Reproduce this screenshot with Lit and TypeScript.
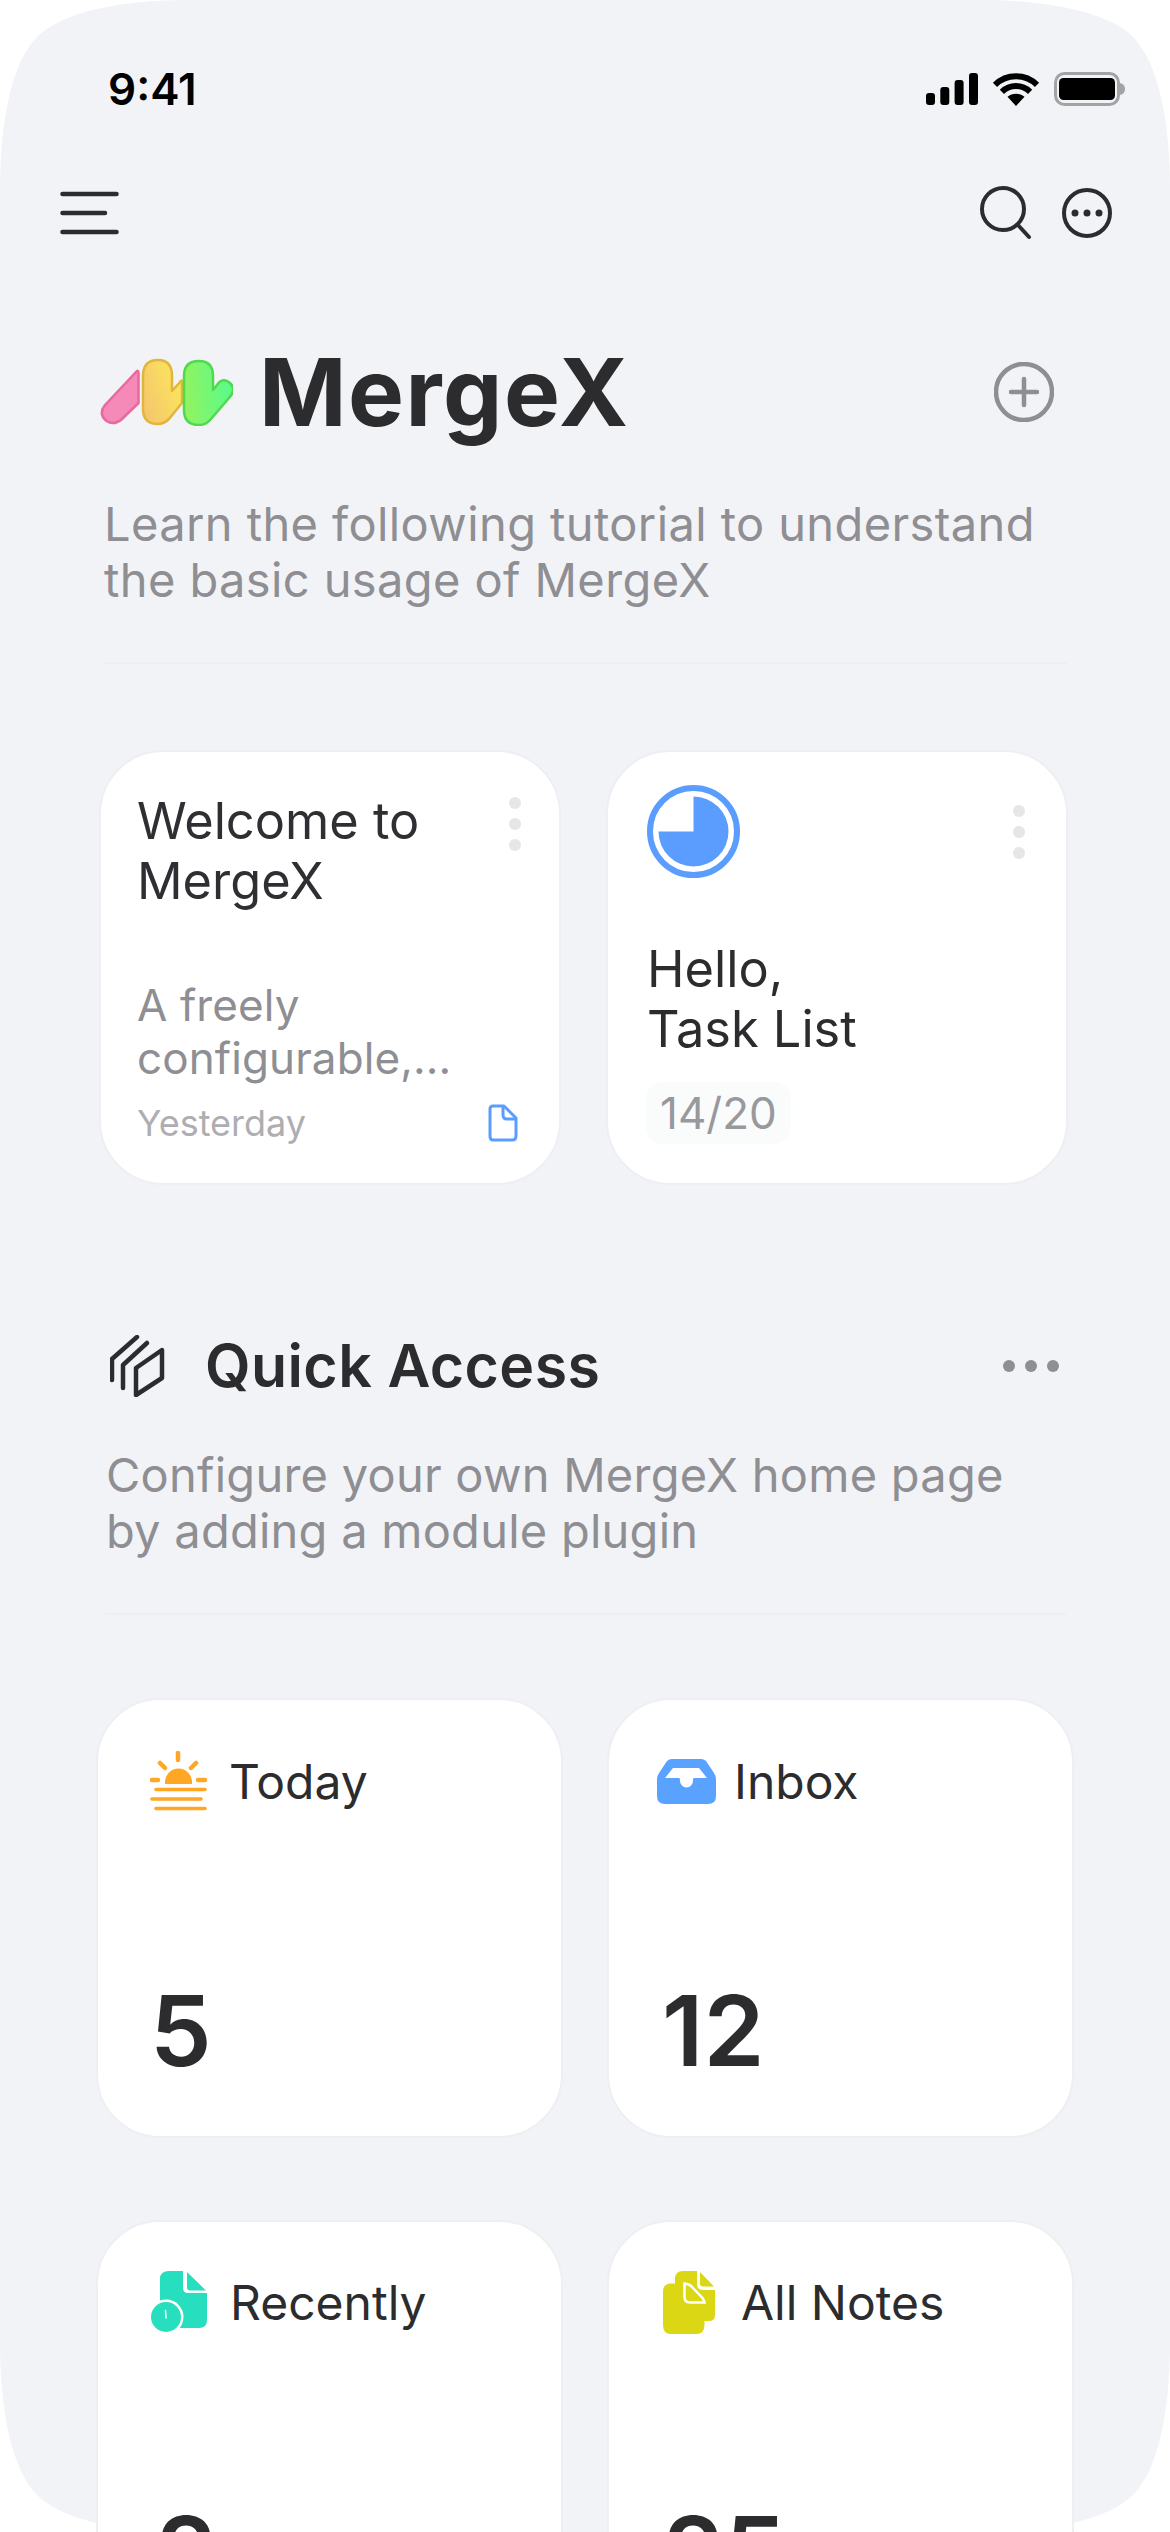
import { LitElement, html, css, svg } from "lit";
import { customElement } from "lit/decorators.js";

const dots = html`<div class="kebab"><i></i><i></i><i></i></div>`;

const todayIcon = svg`<svg class="ic" style="width:58px;height:60px" viewBox="0 0 58 60">
  <g fill="none" stroke="#FFA723" stroke-width="4.5" stroke-linecap="round">
    <path d="M28 2V9M10 12l5 5M46 12l-5 5M2 29h6M48 29h7"/>
  </g>
  <path d="M15 33V31a13.500 13.500 0 0 1 27 0v2z" fill="#FFA723"/>
  <g stroke="#FFA723" stroke-width="3.600" stroke-linecap="round">
    <path d="M6 38.500H55M2 48H51M6 57.500H55"/>
  </g></svg>`;

const inboxIcon = svg`<svg class="ic" style="width:59px;height:45px" viewBox="0 0 59 45">
  <path d="M15 0H44Q47 0 49 2L57 14Q59 17 59 20V37Q59 45 51 45H8Q0 45 0 37V20Q0 17 2 14L10 2Q12 0 15 0Z" fill="#5AA2FF"/>
  <path d="M16 9H42L50 19H37Q36 19 36 21V22A6.500 6.500 0 0 1 23 22V21Q23 19 22 19H8Z" fill="#fff"/></svg>`;

const recentIcon = svg`<svg class="ic" style="width:57px;height:62px" viewBox="0 0 57 62">
  <path d="M18 0H32V17Q32 22 37 22H56V49Q56 57 48 57H9V8Q9 0 18 0Z" fill="#27DFBF"/>
  <path d="M36 1L55 19.500H39Q36 19.500 36 16.500Z" fill="#27DFBF"/>
  <circle cx="15" cy="46" r="17.500" fill="#fff"/>
  <circle cx="15" cy="46" r="15" fill="#27DFBF"/>
  <path d="M14.500 39.500L15 47" stroke="#fff" stroke-width="1.500" stroke-linecap="round"/></svg>`;

const notesIcon = svg`<svg class="ic" style="width:52px;height:63px" viewBox="0 0 52 63">
  <path d="M20 0H34V13Q34 19 40 19H52V44Q52 50 46 50H12V8Q12 0 20 0Z" fill="#DCD714"/>
  <path d="M37 1L51 15.500H40Q37 15.500 37 12.500Z" fill="#DCD714"/>
  <path d="M8 12.500H20V27Q20 33 26 33H41.500V54Q41.500 63 33 63H8Q0 63 0 54V21Q0 12.500 8 12.500Z" fill="#DCD714"/>
  <path d="M21.500 12.500Q27 13 30 17L39.500 27Q41 29 41.500 31.500H27Q21.500 31.500 21.500 26Z" fill="#DCD714" stroke="#fff" stroke-width="2.500"/></svg>`;

const cards = [
  { icon: todayIcon, label: "Today", n: "5", cls: "today" },
  { icon: inboxIcon, label: "Inbox", n: "12", cls: "inbox" },
  { icon: recentIcon, label: "Recently", n: "2", cls: "recent" },
  { icon: notesIcon, label: "All Notes", n: "25", cls: "notes" },
];

@customElement("app-root")
export class AppRoot extends LitElement {
  static styles = css`
    :host { display: block; position: relative; width: 1170px; height: 2532px; overflow: hidden; background: #fff;
      font-family: Inter, "Liberation Sans", sans-serif; color: #2c2c2e; }
    .backdrop { position: absolute; inset: 0; width: 1170px; height: 2532px; }
    .screen { position: relative; display: flex; flex-direction: column; }
    svg { display: block; flex: none; }
    .status { display: flex; justify-content: space-between; align-items: center; height: 44px; margin-top: 67px; padding: 0 45px 0 108px; }
    .time { font-size: 44px; line-height: 44px; font-weight: 600; color: #000; }
    .sys { display: flex; align-items: center; gap: 14px; }
    .nav { display: flex; justify-content: space-between; align-items: center; height: 66px; margin-top: 69px; padding: 0 58px 0 60px; }
    .nav-right { display: flex; align-items: center; gap: 30px; }
    .brand { display: flex; align-items: center; height: 104px; margin-top: 94px; padding: 0 116px 0 100px; }
    .brand h1 { margin: 0 0 0 26px; flex: 1; font-size: 94px; line-height: 104px; font-weight: 700; color: #2c2c2e; letter-spacing: 1.500px; }
    .lead { margin: 0; padding-left: 104px; font-size: 47px; line-height: 56px; color: #8e8e93; letter-spacing: 0.4px; }
    .lead.first { margin-top: 52px; height: 112px; }
    .rule { height: 2px; background: #edeef1; margin: 0 104px 0 105px; }
    .rule.first { margin-top: 54px; }
    .top-cards { display: grid; grid-template-columns: 462px 462px; gap: 45px; margin: 86px 0 0 99px; }
    .card { background: #fff; border: 2px solid #eeeff3; border-radius: 64px; box-sizing: border-box; position: relative; }
    .top-cards .card { height: 435px; }
    .kebab { position: absolute; display: flex; flex-direction: column; gap: 9px; }
    .kebab i { width: 12px; height: 12px; border-radius: 50%; background: #e6e6e6; }
    .welcome { padding: 39px 30px 0 36px; display: flex; flex-direction: column; }
    .welcome .kebab { top: 45px; right: 38px; }
    .card-title { margin: 0; font-size: 50.500px; line-height: 60px; font-weight: 400; color: #2f2f33; }
    .snippet { margin: 68px 0 0; font-size: 44px; line-height: 53px; color: #8e8e93; letter-spacing: 0.1px; white-space: nowrap; }
    .meta { display: flex; justify-content: space-between; align-items: center; margin-top: 15px; padding-right: 11px; }
    .meta span { font-size: 36px; line-height: 46px; color: #aeaeb2; }
    .task { padding: 33px 30px 0 39px; display: flex; flex-direction: column; }
    .task .kebab { top: 53px; right: 41px; }
    .task .card-title { margin-top: 61px; color: #2c2c2e; }
    .badge { align-self: flex-start; margin: 23px 0 0 -1px; height: 62px; box-sizing: border-box; padding: 0 14px; display: flex; align-items: center; background: #fafbfb; border-radius: 16px; font-size: 44px; color: #98989d; }
    .section { display: flex; align-items: center; height: 66px; margin-top: 148px; padding: 0 111px 0 110px; }
    .section h2 { margin: 0 0 0 40px; flex: 1; font-size: 59px; line-height: 66px; font-weight: 600; color: #2c2c2e; letter-spacing: 0.4px; }
    .more { display: flex; gap: 10px; }
    .more i { width: 12px; height: 12px; border-radius: 50%; background: #8e8e93; }
    .lead.second { margin-top: 48px; height: 112px; padding-left: 106px; letter-spacing: 0.25px; }
    .rule.second { margin-top: 54px; }
    .grid { display: grid; grid-template-columns: 467px 467px; column-gap: 44px; row-gap: 82px; margin: 83px 0 0 96px; }
    .tile { height: 440px; padding: 0 0 0 52px; display: flex; flex-direction: column; }
    .tile .head { display: flex; align-items: center; height: 62px; margin-top: 50px; gap: 21px; font-size: 48px; color: #2c2c2e; }
    .tile.inbox { padding-left: 48px; }
    .tile.inbox .head { gap: 18px; }
    .tile.recent { padding-left: 53px; }
    .tile.recent .head { gap: 22px; margin-top: 49px; }
    .tile.notes { padding-left: 54px; }
    .tile.notes .head { gap: 26px; margin-top: 49px; }
    .tile .num { margin-top: 164px; font-size: 98px; line-height: 110px; font-weight: 600; color: #2c2c2e; }
    .tile.inbox .num { margin-left: 5px; }
    .tile.recent .num { margin-left: 5px; }
  `;

  render() {
    return html`
      <svg class="backdrop" viewBox="0 0 1170 2532">
        <path fill="#f2f3f7" d="M190 0H980C1050 0 1108 12 1133 37C1158 62 1170 120 1170 190V2342C1170 2412 1158 2470 1133 2495C1108 2520 1050 2532 980 2532H190C120 2532 62 2520 37 2495C12 2470 0 2412 0 2342V190C0 120 12 62 37 37C62 12 120 0 190 0Z"/>
      </svg>
      <div class="screen">
        <div class="status">
          <span class="time">9:41</span>
          <div class="sys">
            <svg width="52" height="32" viewBox="0 0 52 32" fill="#000">
              <rect x="0" y="20" width="9" height="12" rx="3"/><rect x="14.300" y="14" width="9" height="18" rx="3"/>
              <rect x="28.600" y="7" width="9" height="25" rx="3"/><rect x="43" y="0" width="9" height="32" rx="3"/>
            </svg>
            <svg width="48" height="33" viewBox="0 0 48 33">
              <path d="M3 11.800A30 30 0 0 1 45 11.800M9.900 18.900A20 20 0 0 1 38.100 18.900" fill="none" stroke="#000" stroke-width="6"/>
              <path d="M24 33L15.500 23.800A13 13 0 0 1 32.500 23.800Z" fill="#000"/>
            </svg>
            <svg width="71" height="34" viewBox="0 0 71 34">
              <rect x="1.500" y="1.500" width="63" height="31" rx="9" fill="none" stroke="#a3a3a6" stroke-width="3"/>
              <rect x="5" y="6" width="56" height="22" rx="4.500" fill="#000"/>
              <path d="M66 11Q71 12 71 17Q71 22 66 23Z" fill="#a3a3a6"/>
            </svg>
          </div>
        </div>
        <div class="nav">
          <svg width="59" height="44" viewBox="0 0 59 44" fill="none" stroke="#2c2c2e" stroke-width="4.500" stroke-linecap="round">
            <path d="M2.500 3H56.500M2.500 22H45M2.500 41H56.500"/>
          </svg>
          <div class="nav-right">
            <svg width="52" height="54" viewBox="0 0 52 54" fill="none" stroke="#2c2c2e" stroke-width="4" stroke-linecap="round">
              <circle cx="23" cy="23" r="21"/><path d="M37.500 38.500L49 51"/>
            </svg>
            <svg width="50" height="50" viewBox="0 0 50 50">
              <circle cx="25" cy="25" r="23" fill="none" stroke="#2c2c2e" stroke-width="4"/>
              <circle cx="13" cy="25" r="3.500" fill="#2c2c2e"/><circle cx="25" cy="25" r="3.500" fill="#2c2c2e"/><circle cx="37" cy="25" r="3.500" fill="#2c2c2e"/>
            </svg>
          </div>
        </div>
        <div class="brand">
          <svg width="133" height="68" viewBox="0 0 133 68">
            <defs>
              <linearGradient id="gy" x1="0" y1="1" x2="1" y2="0.400"><stop offset="0" stop-color="#f4c270"/><stop offset="1" stop-color="#fbe55c"/></linearGradient>
              <linearGradient id="gg" x1="0" y1="0.500" x2="1" y2="0.400"><stop offset="0" stop-color="#93f35f"/><stop offset="1" stop-color="#57fb8e"/></linearGradient>
            </defs>
            <path d="M36.500 13.500Q38.500 11.500 38.500 15V45L22 61Q14 68 6.500 63Q-2 56 5 47Z" fill="#f589b8" stroke="#e8689f" stroke-width="2.500" stroke-linejoin="round"/>
            <path d="M43 18Q43 2 58 2Q72 2 72 18V33L81 23Q82 22 82 24V45L69 61Q64 66 58 66Q43 66 43 51Z" fill="url(#gy)" stroke="#e2b63a" stroke-width="2.500" stroke-linejoin="round"/>
            <path d="M84 18Q84 3 99 3Q113 3 113 18V32L117 27Q123 18 131 26Q136 33 129 40L111 61Q106 67 99 67Q84 67 84 52Z" fill="url(#gg)" stroke="#4fd94f" stroke-width="2.500" stroke-linejoin="round"/>
          </svg>
          <h1>MergeX</h1>
          <svg width="60" height="60" viewBox="0 0 60 60" fill="none" stroke="#8e8e93" stroke-width="4.500" stroke-linecap="round">
            <circle cx="30" cy="30" r="28"/><path d="M30 17V43M17 30H43"/>
          </svg>
        </div>
        <p class="lead first">Learn the following tutorial to understand<br />the basic usage of MergeX</p>
        <div class="rule first"></div>
        <div class="top-cards">
          <div class="card welcome">
            ${dots}
            <h3 class="card-title">Welcome to<br />MergeX</h3>
            <p class="snippet">A freely<br />configurable,...</p>
            <div class="meta">
              <span>Yesterday</span>
              <svg width="30" height="38" viewBox="0 0 30 38" fill="none" stroke="#5b9dff" stroke-width="3" stroke-linejoin="round">
                <path d="M5 2H16L28 14V32Q28 36 24 36H5Q2 36 2 32V5Q2 2 5 2Z"/><path d="M15 2V11Q15 15 19 15H28"/>
              </svg>
            </div>
          </div>
          <div class="card task">
            ${dots}
            <svg width="93" height="93" viewBox="0 0 93 93">
              <circle cx="46.500" cy="46.500" r="43.500" fill="none" stroke="#5b9dff" stroke-width="6"/>
              <path d="M46.500 11.500A35 35 0 1 1 11.500 46.500H46.500Z" fill="#5b9dff"/>
            </svg>
            <h3 class="card-title">Hello,<br />Task List</h3>
            <div class="badge">14/20</div>
          </div>
        </div>
        <div class="section">
          <svg width="55" height="62" viewBox="0 0 55 62" fill="none" stroke="#2c2c2e" stroke-width="4.500" stroke-linejoin="round" stroke-linecap="round">
            <path d="M27 2L2 24V45"/><path d="M37 8L13 30V53"/><path d="M26 33L52 15V43L26 60Z"/>
          </svg>
          <h2>Quick Access</h2>
          <div class="more"><i></i><i></i><i></i></div>
        </div>
        <p class="lead second">Configure your own MergeX home page<br />by adding a module plugin</p>
        <div class="rule second"></div>
        <div class="grid">
          ${cards.map(
            (c) => html`<div class="card tile ${c.cls}">
              <div class="head">${c.icon}<span>${c.label}</span></div>
              <div class="num">${c.n}</div>
            </div>`
          )}
        </div>
      </div>
    `;
  }
}
